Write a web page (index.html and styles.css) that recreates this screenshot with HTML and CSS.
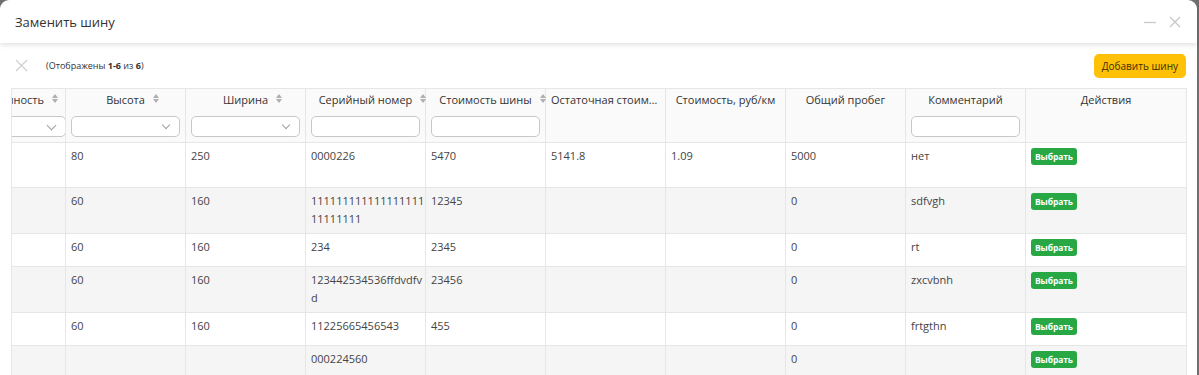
FILE: index.html
```html
<!DOCTYPE html>
<html lang="ru">
<head>
    <meta charset="UTF-8">
    <title>Заменить шину</title>
    <link rel="stylesheet" href="styles.css">
</head>
<body>
    <div class="modal">
        <!-- Заголовок окна -->
        <div class="modal-header">
            <span class="modal-title">Заменить шину</span>
            <div class="modal-controls">
                <svg width="12" height="12" viewBox="0 0 12 12"><path d="M0 6.5h12" stroke="#c8c8c8" stroke-width="1.3"/></svg>
                <svg width="12" height="12" viewBox="0 0 12 12"><path d="M1 1l10 10M11 1L1 11" stroke="#c8c8c8" stroke-width="1.4"/></svg>
            </div>
        </div>

        <div class="modal-body">
            <div class="toolbar">
                <svg class="clear-x" width="13" height="13" viewBox="0 0 13 13"><path d="M1 1l11 11M12 1L1 12" stroke="#d2d2d2" stroke-width="1.4"/></svg>
                <span class="summary">(Отображены <b>1-6</b> из <b>6</b>)</span>
                <button class="btn-add">Добавить шину</button>
            </div>

            <table class="grid">
                <thead>
                    <tr>
                        <th class="clipped"><div class="clip-inner"><span class="th-label"><span class="sortable">Грузоподъемность</span></span><div class="select"></div></div></th>
                        <th><span class="th-label"><span class="sortable">Высота</span></span><div class="select"><i class="chev"></i></div></th>
                        <th><span class="th-label"><span class="sortable">Ширина</span></span><div class="select"><i class="chev"></i></div></th>
                        <th><span class="th-label"><span class="sortable">Серийный номер</span></span><div class="text-input"></div></th>
                        <th><span class="th-label"><span class="sortable">Стоимость шины</span></span><div class="text-input"></div></th>
                        <th class="left"><span class="th-label ellipsis">Остаточная стоимость</span></th>
                        <th><span class="th-label">Стоимость, руб/км</span></th>
                        <th><span class="th-label">Общий пробег</span></th>
                        <th><span class="th-label">Комментарий</span><div class="text-input"></div></th>
                        <th class="wide"><span class="th-label">Действия</span></th>
                    </tr>
                </thead>
                <tbody>
                    <tr class="tall">
                        <td></td><td>80</td><td>250</td><td>0000226</td><td>5470</td><td>5141.8</td><td>1.09</td><td>5000</td><td>нет</td>
                        <td><button class="btn-pick">Выбрать</button></td>
                    </tr>
                    <tr>
                        <td></td><td>60</td><td>160</td><td>111111111111111111<br>11111111</td><td>12345</td><td></td><td></td><td>0</td><td>sdfvgh</td>
                        <td><button class="btn-pick">Выбрать</button></td>
                    </tr>
                    <tr>
                        <td></td><td>60</td><td>160</td><td>234</td><td>2345</td><td></td><td></td><td>0</td><td>rt</td>
                        <td><button class="btn-pick">Выбрать</button></td>
                    </tr>
                    <tr>
                        <td></td><td>60</td><td>160</td><td>123442534536ffdvdfv<br>d</td><td>23456</td><td></td><td></td><td>0</td><td>zxcvbnh</td>
                        <td><button class="btn-pick">Выбрать</button></td>
                    </tr>
                    <tr>
                        <td></td><td>60</td><td>160</td><td>11225665456543</td><td>455</td><td></td><td></td><td>0</td><td>frtgthn</td>
                        <td><button class="btn-pick">Выбрать</button></td>
                    </tr>
                    <tr>
                        <td></td><td></td><td></td><td>000224560</td><td></td><td></td><td></td><td>0</td><td></td>
                        <td><button class="btn-pick">Выбрать</button></td>
                    </tr>
                </tbody>
            </table>
        </div>
    </div>
</body>
</html>
```
FILE: styles.css
```css
* {
    margin: 0;
    padding: 0;
    box-sizing: border-box;
}

body {
    font-family: 'Open Sans', 'Noto Sans', sans-serif;
    background: #6f6f6f;
    color: #333;
    height: 375px;
    overflow: hidden;
}

.modal {
    background: #fff;
    width: 1197px;
    height: 100%;
    border-radius: 9px 9px 0 0;
}

.modal-header {
    height: 43px;
    display: flex;
    align-items: center;
    justify-content: space-between;
    padding: 0 16px 0 15px;
    box-shadow: 0 2px 5px rgba(0, 0, 0, 0.12);
    position: relative;
}

.modal-title {
    font-size: 13px;
    color: #333;
}

.modal-controls {
    display: flex;
    gap: 13px;
    align-items: center;
}

.modal-body {
    padding: 0 12px 0 11px;
}

.toolbar {
    height: 45px;
    display: flex;
    align-items: center;
}

.clear-x {
    margin-left: 4px;
    margin-right: 18px;
}

.summary {
    font-size: 9px;
    color: #333;
}

.btn-add {
    margin-left: auto;
    margin-right: -1px;
    background: #ffc107;
    border: none;
    border-radius: 5px;
    height: 24px;
    padding: 0 8px;
    font-family: inherit;
    font-size: 10px;
    color: #3a3000;
}

.grid {
    border-collapse: collapse;
    table-layout: fixed;
    width: 1175px;
    font-size: 11px;
}

.grid th,
.grid td {
    border: 1px solid #e6e6e6;
    width: 120px;
    vertical-align: top;
}

.grid th {
    height: 54px;
    font-weight: 400;
    color: #333;
    background: #fafafa;
    padding: 4px 5px 0;
    text-align: center;
}

.grid th.left {
    text-align: left;
}

.grid th.clipped,
.grid td:first-child {
    width: 54px;
}

.grid th.wide {
    width: 161px;
}

.clipped {
    overflow: hidden;
}

.clip-inner {
    width: 250px;
    margin-left: -201px;
    text-align: right;
    overflow: hidden;
}

.th-label {
    display: block;
    height: 16px;
    line-height: 14px;
    white-space: nowrap;
}

.clip-inner .th-label {
    padding-right: 22px;
}

.ellipsis {
    overflow: hidden;
    text-overflow: ellipsis;
}

/* стрелки сортировки справа от подписи */
.sortable {
    position: relative;
}

.sortable::before,
.sortable::after {
    content: '';
    position: absolute;
    left: calc(100% + 8px);
    border-left: 3.5px solid transparent;
    border-right: 3.5px solid transparent;
}

.sortable::before {
    top: 2px;
    border-bottom: 4px solid #b0b0b0;
}

.sortable::after {
    top: 7px;
    border-top: 4px solid #b0b0b0;
}

.select,
.text-input {
    height: 21px;
    margin-top: 7px;
    border: 1px solid #c8c8c8;
    border-radius: 5px;
    background: #fff;
    position: relative;
}

.chev,
.clip-inner .select::after {
    content: '';
    position: absolute;
    right: 10px;
    top: 5px;
    width: 6px;
    height: 6px;
    border-right: 1px solid #a0a0a0;
    border-bottom: 1px solid #a0a0a0;
    transform: rotate(45deg);
}

.grid td {
    padding: 4px 5px 5px;
    line-height: 18px;
    color: #444;
    height: 33px;
}

.grid tr.tall td {
    height: 45px;
}

.grid tbody tr:nth-child(even) td {
    background: #f5f5f5;
}

.btn-pick {
    margin-top: 1px;
    background: #28a745;
    color: #fff;
    border: none;
    border-radius: 3px;
    font-family: inherit;
    font-size: 8.5px;
    font-weight: 700;
    height: 17px;
    padding: 0 4px;
    vertical-align: top;
    letter-spacing: -0.1px;
}
```
